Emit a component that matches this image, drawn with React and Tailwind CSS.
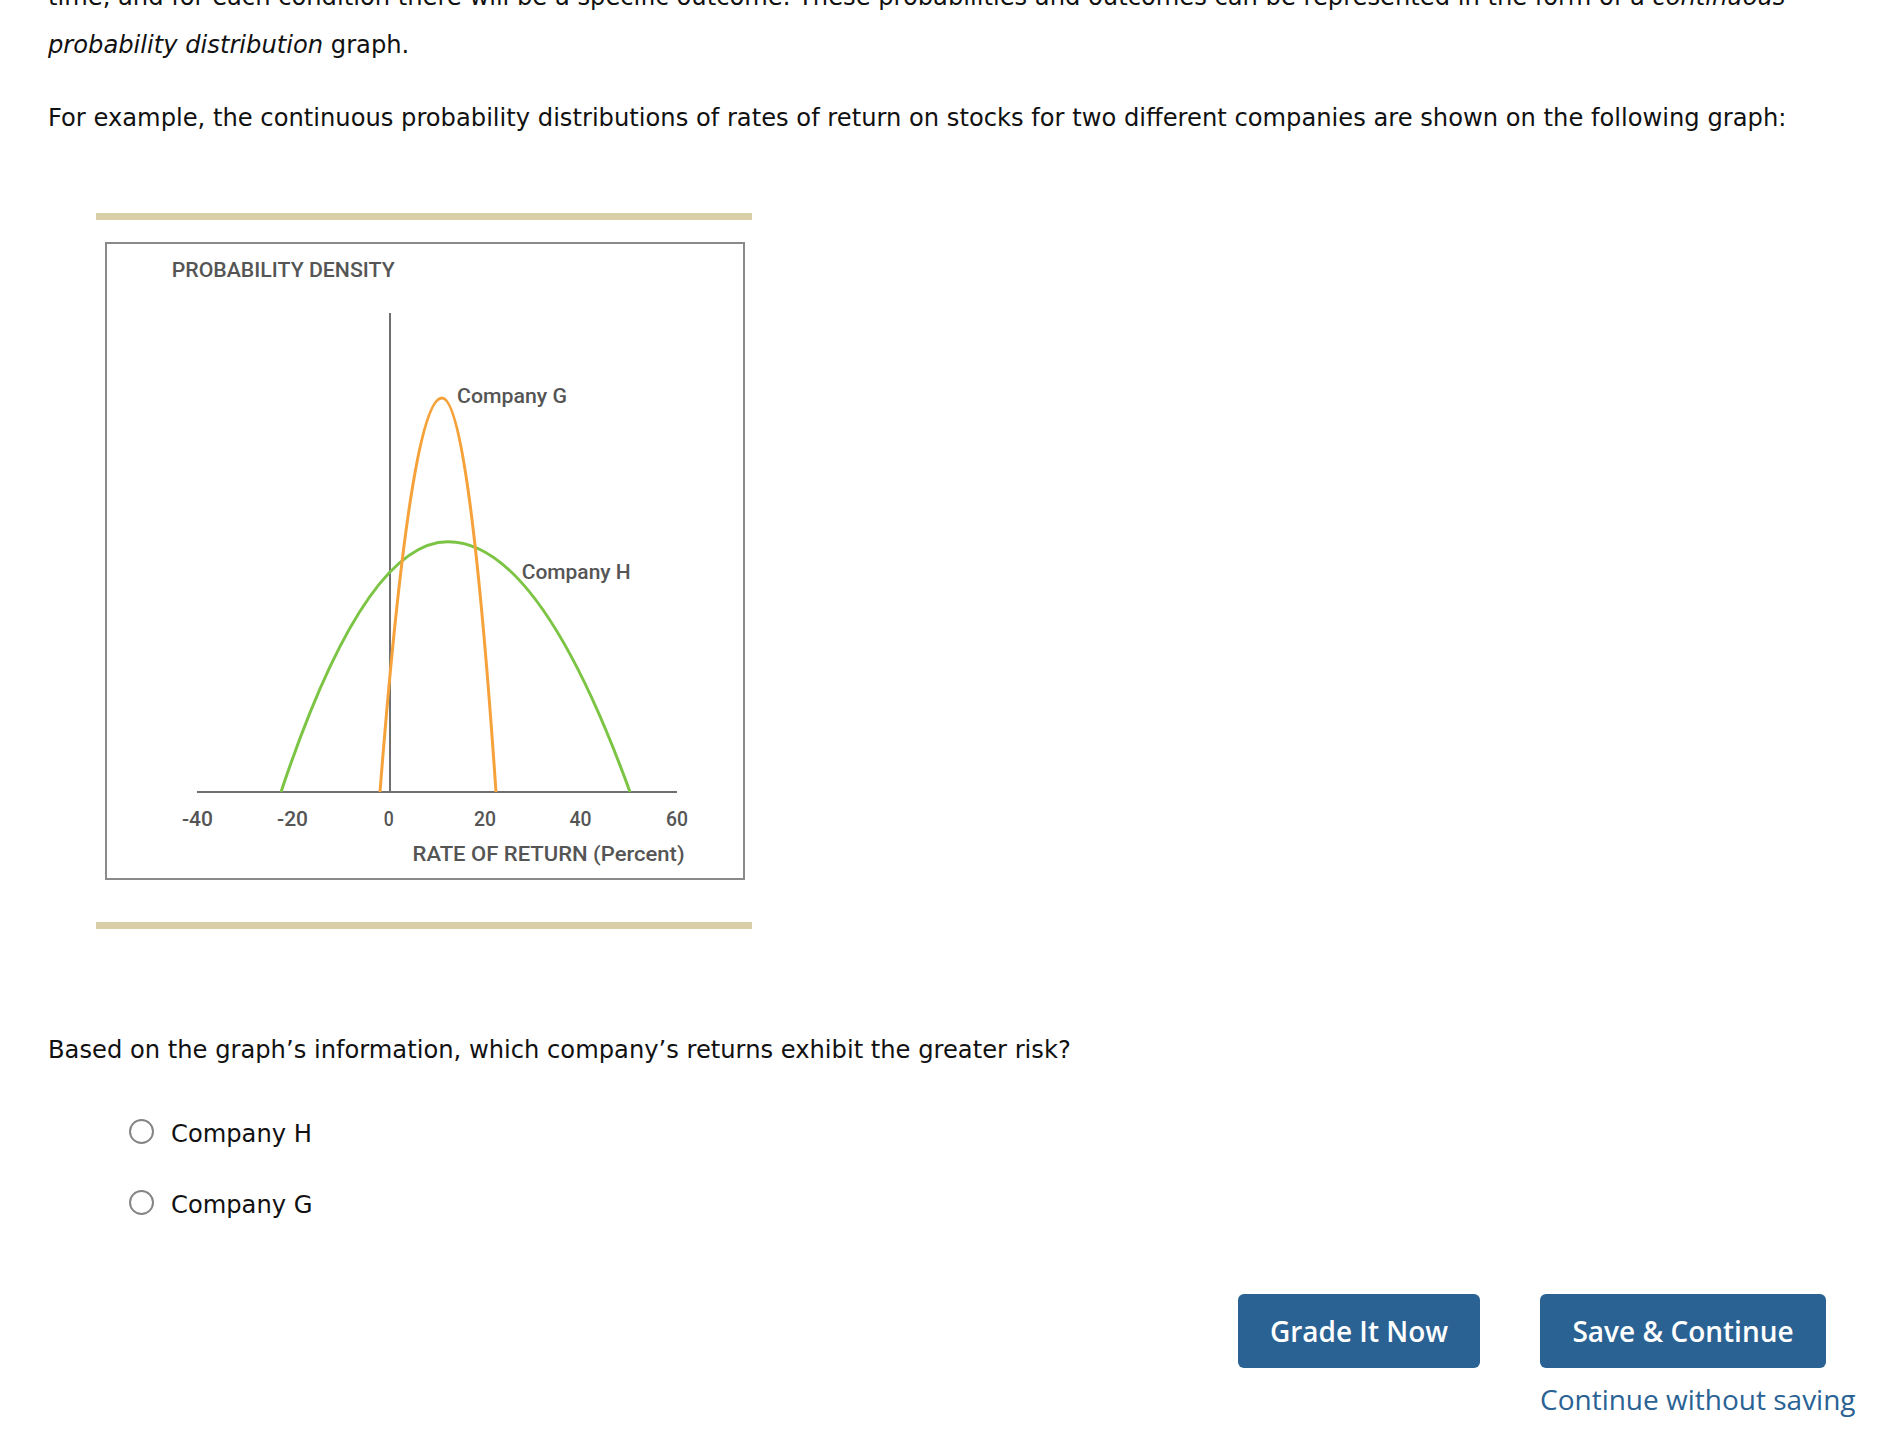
import React from "react";

const ORANGE = "#f5a23a";
const GREEN = "#7cc444";
const AXIS = "#6f6f6f";
const LABEL = "#555555";
const LF = "Roboto, 'DejaVu Sans Condensed', 'Liberation Sans', sans-serif";

function Lbl({ x, y, w, anchor = "start", children }) {
  return (
    <text
      x={x}
      y={y}
      textLength={w}
      lengthAdjust="spacingAndGlyphs"
      textAnchor={anchor}
      fontFamily={LF}
      fontWeight={500}
      fontSize={21}
      fill={LABEL}
    >
      {children}
    </text>
  );
}

function Chart() {
  return (
    <svg width="636" height="634" viewBox="107 244 636 634" className="block">
      <Lbl x={171.7} y={276.7} w={223}>PROBABILITY DENSITY</Lbl>
      <line x1="390" y1="313" x2="390" y2="792" stroke={AXIS} strokeWidth="2" />
      <line x1="197" y1="792" x2="677" y2="792" stroke={AXIS} strokeWidth="2" />
      <path
        d="M281,792 Q364.5,541.7 448,541.7 Q539,541.7 630,792"
        fill="none"
        stroke={GREEN}
        strokeWidth="3"
      />
      <path
        d="M380,792 Q411,398 442,398 Q469,398 496,792"
        fill="none"
        stroke={ORANGE}
        strokeWidth="3"
      />
      <Lbl x={457} y={403} w={110}>Company G</Lbl>
      <Lbl x={521.7} y={579.3} w={109}>Company H</Lbl>
      <Lbl x={197.4} y={826} w={31} anchor="middle">-40</Lbl>
      <Lbl x={292.5} y={826} w={31} anchor="middle">-20</Lbl>
      <Lbl x={388.7} y={826} w={10} anchor="middle">0</Lbl>
      <Lbl x={485} y={826} w={22} anchor="middle">20</Lbl>
      <Lbl x={580.4} y={826} w={22} anchor="middle">40</Lbl>
      <Lbl x={676.9} y={826} w={22} anchor="middle">60</Lbl>
      <Lbl x={412.6} y={861} w={272}>RATE OF RETURN (Percent)</Lbl>
    </svg>
  );
}

function Radio({ label }) {
  return (
    <div className="flex h-[71px] items-center pl-[129px]">
      <span className="box-border block h-[25px] w-[25px] shrink-0 rounded-full border-2 border-[#858585] bg-white" />
      <span className="ml-[17px] mt-[4px]">{label}</span>
    </div>
  );
}

export default function App() {
  return (
    <div
      className="relative flex min-h-[1450px] w-[1894px] flex-col overflow-hidden bg-white text-[24.2px] leading-[48px] text-[#111]"
      style={{ fontFamily: "'DejaVu Sans', Verdana, sans-serif" }}
    >
      <p className="mt-[-27px] whitespace-nowrap pl-[48px]">
        time, and for each condition there will be a specific outcome. These probabilities and outcomes can be
        represented in the form of a <i>continuous</i>
        <br />
        <i>probability distribution</i> graph.
      </p>
      <p className="mt-[25px] whitespace-nowrap pl-[48px]">
        For example, the continuous probability distributions of rates of return on stocks for two different
        companies are shown on the following graph:
      </p>

      <div className="ml-[96px] mt-[71px] w-[656px]">
        <div className="h-[7px] bg-[#d8cea8]" />
        <div className="ml-[9px] mt-[22px] box-border h-[638px] w-[640px] border-2 border-[#8a8a8a]">
          <Chart />
        </div>
        <div className="mt-[42px] h-[7px] bg-[#d8cea8]" />
      </div>

      <p className="mt-[97px] whitespace-nowrap pl-[48px]">
        Based on the graph’s information, which company’s returns exhibit the greater risk?
      </p>

      <div className="mt-[22px]">
        <Radio label="Company H" />
        <Radio label="Company G" />
      </div>

      <div
        className="mt-[56px] flex items-start justify-end gap-[60px] pr-[41px]"
        style={{ fontFamily: "'Open Sans', sans-serif" }}
      >
        <button className="h-[74px] w-[242px] rounded-[6px] bg-[#2a6294] text-[28px] font-semibold leading-none text-white">
          Grade It Now
        </button>
        <div className="flex w-[313px] flex-col items-start">
          <button className="h-[74px] w-[286px] rounded-[6px] bg-[#2a6294] text-[28px] font-semibold leading-none text-white">
            Save &amp; Continue
          </button>
          <a className="mt-[12px] whitespace-nowrap text-[28px] leading-[38px] text-[#2a6294]">
            Continue without saving
          </a>
        </div>
      </div>
    </div>
  );
}
